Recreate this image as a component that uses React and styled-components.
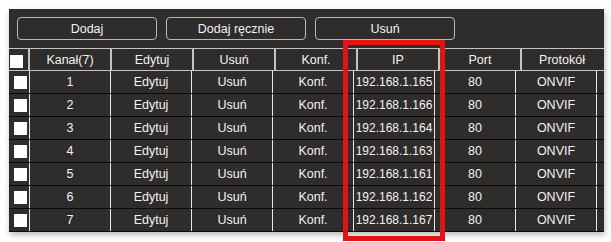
import React from "react";
import styled, { createGlobalStyle } from "styled-components";

const GlobalStyle = createGlobalStyle`
  html, body {
    margin: 0;
    padding: 0;
    background: #ffffff;
  }
  body {
    font-family: "Liberation Sans", Arial, sans-serif;
  }
`;

const Page = styled.div`
  padding: 9px 0 0 9px;
  width: 611px;
  height: 242px;
  box-sizing: border-box;
  position: relative;
  overflow: hidden;
`;

const Panel = styled.div`
  width: 595px;
  height: 223px;
  background: #2f2c2c;
  box-shadow: 1px 3px 6px rgba(0, 0, 0, 0.28);
  display: flex;
  flex-direction: column;
`;

const Toolbar = styled.div`
  display: flex;
  gap: 9px;
  padding: 8px 0 0 8px;
  height: 23px;
`;

const Button = styled.button`
  width: 140px;
  height: 23px;
  background: transparent;
  border: 1px solid #b9b9b9;
  border-radius: 4px;
  color: #f2f2f2;
  font-family: "Liberation Sans", Arial, sans-serif;
  font-size: 12.5px;
  padding: 0;
  box-sizing: border-box;
`;

const HeaderRow = styled.div`
  margin-top: 8px;
  display: grid;
  grid-template-columns: 19px repeat(7, 82px);
  height: 23px;
  border-top: 1px solid #c4c4c4;
  border-bottom: 1px solid #c4c4c4;
  box-sizing: border-box;
`;

const HeadCell = styled.div`
  display: flex;
  align-items: center;
  justify-content: center;
  color: #f2f2f2;
  font-size: 12.5px;
  border-left: ${(p) => (p.$first ? "none" : "2px solid #c4c4c4")};
  box-sizing: border-box;
`;

const Row = styled.div`
  display: grid;
  grid-template-columns: 20px repeat(7, 81px) 1fr;
  height: 23px;
  border-bottom: 1px solid #0a0a0a;
  box-sizing: border-box;
`;

const Cell = styled.div`
  display: flex;
  align-items: center;
  justify-content: center;
  color: #f2f2f2;
  font-size: 12.5px;
  border-left: ${(p) => (p.$first ? "none" : "1px solid #e6e6e6")};
  box-sizing: border-box;
  white-space: nowrap;
`;

const IpText = styled.span`
  font-size: 12px;
`;

const CheckBox = styled.span`
  display: block;
  width: 13px;
  height: 13px;
  background: #ffffff;
  margin-left: ${(p) => (p.$head ? "-4px" : "3px")};
  margin-top: ${(p) => (p.$head ? "3px" : "0")};
`;

const Highlight = styled.div`
  position: absolute;
  left: 343px;
  top: 40px;
  width: 102px;
  height: 201px;
  border: 5px solid #e01414;
  box-sizing: border-box;
  pointer-events: none;
`;

const columns = ["Kanał(7)", "Edytuj", "Usuń", "Konf.", "IP", "Port", "Protokół"];

const cameras = [
  { ch: 1, ip: "192.168.1.165" },
  { ch: 2, ip: "192.168.1.166" },
  { ch: 3, ip: "192.168.1.164" },
  { ch: 4, ip: "192.168.1.163" },
  { ch: 5, ip: "192.168.1.161" },
  { ch: 6, ip: "192.168.1.162" },
  { ch: 7, ip: "192.168.1.167" },
];

export default function App() {
  return (
    <>
      <GlobalStyle />
      <Page>
        <Panel>
          <Toolbar>
            <Button>Dodaj</Button>
            <Button>Dodaj ręcznie</Button>
            <Button>Usuń</Button>
          </Toolbar>
          <HeaderRow>
            <HeadCell $first>
              <CheckBox $head />
            </HeadCell>
            {columns.map((c) => (
              <HeadCell key={c}>{c}</HeadCell>
            ))}
          </HeaderRow>
          {cameras.map((cam) => (
            <Row key={cam.ch}>
              <Cell $first>
                <CheckBox />
              </Cell>
              <Cell>{cam.ch}</Cell>
              <Cell>Edytuj</Cell>
              <Cell>Usuń</Cell>
              <Cell>Konf.</Cell>
              <Cell>
                <IpText>{cam.ip}</IpText>
              </Cell>
              <Cell>80</Cell>
              <Cell>ONVIF</Cell>
              <Cell />
            </Row>
          ))}
        </Panel>
        <Highlight />
      </Page>
    </>
  );
}
